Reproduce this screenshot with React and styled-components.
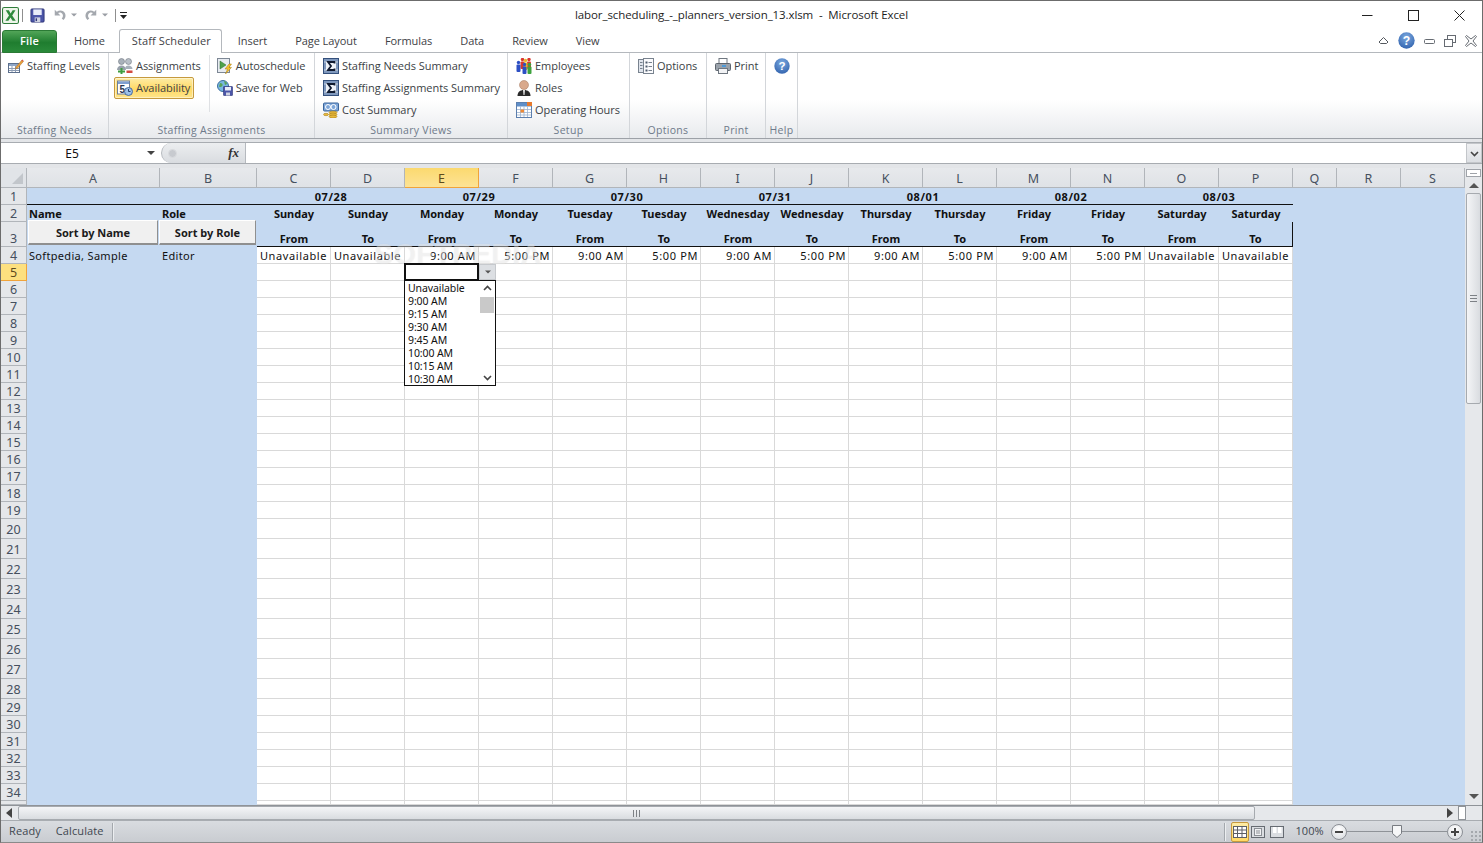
import React from 'react';
import styled, { createGlobalStyle } from 'styled-components';

const UI_FONT = '"Open Sans", "Noto Sans", "Liberation Sans", sans-serif';
const SHEET_FONT = '"Noto Sans", "Open Sans", "Liberation Sans", sans-serif';
const BLUE = '#c5d9f1';
const GRID_LINE = '#d9d9d9';

const GlobalStyle = createGlobalStyle`
  html, body { margin: 0; padding: 0; background: #fff; }
  body { font-family: ${UI_FONT}; overflow: hidden; }
  * { box-sizing: border-box; }
`;

const Window = styled.div`
  width: 1483px;
  height: 843px;
  display: flex;
  flex-direction: column;
  border: 1px solid #6c6c6c;
  border-bottom-color: #8a8a8a;
  background: #fff;
  overflow: hidden;
`;

const TitleBar = styled.div`
  height: 28px;
  flex: none;
  display: grid;
  grid-template-columns: 1fr auto 1fr;
  align-items: center;
`;

const QuickAccess = styled.div`
  display: flex;
  align-items: center;
  height: 28px;
  padding: 0 0 0 1px;
`;

const QuickSep = styled.span`
  width: 1px;
  height: 13px;
  flex: none;
  background: #8f8f8f;
  margin: 0 ${p => p.$r}px 0 ${p => p.$l}px;
`;

const QuickGap = styled.span`
  width: ${p => p.$w}px;
  flex: none;
`;

const TitleText = styled.div`
  font-size: 11.5px;
  color: #1e1e1e;
  letter-spacing: -0.09px;
  white-space: pre;
  padding-bottom: 2px;
`;

const WindowButtons = styled.div`
  display: flex;
  justify-content: flex-end;
  align-items: center;
  gap: 35px;
  padding-right: 17px;
`;

const TabRow = styled.div`
  height: 24px;
  flex: none;
  display: flex;
  align-items: flex-end;
  border-bottom: 1px solid #b4b8bd;
  padding-left: 1px;
`;

const FileTab = styled.div`
  width: 55px;
  height: 23px;
  margin-right: 3px;
  margin-bottom: -1px;
  padding-bottom: 2px;
  border-radius: 3px 3px 0 0;
  border: 1px solid #2b7a35;
  background: linear-gradient(#52a558, #1f7d2f 55%, #2a8a3a);
  color: #fff;
  font-size: 11px;
  font-weight: 600;
  letter-spacing: 0.2px;
  display: flex;
  align-items: center;
  justify-content: center;
`;

const Tab = styled.div`
  height: ${p => (p.$active ? 24 : 22)}px;
  padding: 0 ${p => (p.$active ? 10 : 14)}px 2px ${p => (p.$active ? 12 : 14)}px;
  margin: ${p => (p.$active ? '0 2px -1px 0' : '0')};
  font-size: 11px;
  letter-spacing: ${p => (p.$active ? 0.1 : -0.06)}px;
  color: #3e4145;
  display: flex;
  align-items: center;
  background: #fff;
  border: ${p => (p.$active ? '1px solid #b4b8bd' : '0')};
  border-bottom: 0;
  border-radius: 3px 3px 0 0;
  white-space: nowrap;
`;

const RibbonHelp = styled.div`
  margin-left: auto;
  height: 23px;
  display: flex;
  align-items: center;
  gap: 9px;
  padding-right: 5px;
`;

const Ribbon = styled.div`
  height: 86px;
  flex: none;
  display: flex;
  background: linear-gradient(#fff 0, #fff 55%, #e8eaed 100%);
  border-bottom: 1px solid #9da1a7;
`;

const Group = styled.div`
  width: ${p => p.$w}px;
  flex: none;
  display: flex;
  flex-direction: column;
  border-right: 1px solid #d3d6da;
`;

const GroupBody = styled.div`
  flex: 1;
  display: flex;
  padding: 2px 0 0 ${p => p.$pad ?? 5}px;
`;

const GroupLabel = styled.div`
  height: 16px;
  line-height: 16px;
  text-align: center;
  font-size: 10.5px;
  letter-spacing: 0.3px;
  color: #6e7a8a;
`;

const ItemColumn = styled.div`
  display: flex;
  flex-direction: column;
  align-items: flex-start;
  ${p => p.$rule && `
    border-left: 1px solid #dfe1e4;
    margin: 0 0 10px 5px;
    padding-left: 4px;
  `}
`;

const Item = styled.div`
  height: 22px;
  display: flex;
  align-items: center;
  gap: 3px;
  padding: 0 ${p => (p.$on ? 2 : 3)}px 2px;
  font-size: 11px;
  letter-spacing: -0.04px;
  color: #3b3f45;
  white-space: nowrap;
  border-radius: 2px;
  & > svg { margin-top: 2px; }
  ${p => p.$on && `
    width: 80px;
    border: 1px solid #c69a3e;
    background: linear-gradient(#fdeca6, #ffd965 55%, #ffe58a);
    box-shadow: inset 0 0 0 1px rgba(255, 255, 255, .45);
  `}
`;

const FormulaZone = styled.div`
  height: 29px;
  flex: none;
  padding: 3px 0 4px;
  background: #e3e5e8;
`;

const FormulaBar = styled.div`
  height: 22px;
  display: flex;
  background: #fff;
  border-top: 1px solid #a8acb1;
  border-bottom: 1px solid #a8acb1;
`;

const NameBox = styled.div`
  width: 160px;
  flex: none;
  display: flex;
  align-items: center;
  justify-content: center;
  padding-right: 18px;
  position: relative;
  font-family: ${SHEET_FONT};
  font-size: 12px;
  color: #111;
`;

const NameArrow = styled.span`
  position: absolute;
  right: 6px;
  top: 8px;
  border: 4px solid transparent;
  border-top: 4px solid #444;
  border-bottom: 0;
`;

const FormulaTools = styled.div`
  width: 85px;
  flex: none;
  display: flex;
  align-items: center;
  justify-content: space-between;
  padding: 0 6px;
  border-radius: 10px 0 0 10px;
  border-left: 1px solid #b5b9be;
  border-right: 1px solid #b5b9be;
  background: linear-gradient(#eceef0, #d9dce0);
`;

const FxDot = styled.span`
  width: 9px;
  height: 9px;
  border-radius: 50%;
  background: #c7cacf;
  border: 1px solid #dadcdf;
`;

const FxLabel = styled.span`
  font-family: "Liberation Serif", serif;
  font-style: italic;
  font-weight: 700;
  font-size: 13px;
  color: #333;
`;

const FormulaInput = styled.div`
  flex: 1;
`;

const FormulaExpand = styled.div`
  width: 16px;
  flex: none;
  display: flex;
  align-items: center;
  justify-content: center;
  border: 1px solid #c3c6ca;
  background: linear-gradient(#eff0f2, #dcdfe3);
`;

const SheetArea = styled.div`
  height: 637px;
  flex: none;
  display: flex;
`;

const SheetWrap = styled.div`
  position: relative;
  width: 1464px;
  flex: none;
  overflow: hidden;
`;

const Sheet = styled.div`
  display: grid;
  grid-template-columns: 26px 133px 97px repeat(14, 74px) 44px 64px 64px;
  font-family: ${SHEET_FONT};
  font-size: 11px;
  color: #111;
`;

const Corner = styled.div`
  height: 20px;
  background: #e1e4e8;
  border-right: 1px solid #b1b5ba;
  border-bottom: 1px solid #b1b5ba;
  position: relative;
  &::after {
    content: '';
    position: absolute;
    right: 3px;
    bottom: 3px;
    border-style: solid;
    border-width: 0 0 11px 11px;
    border-color: transparent transparent #c2c6cb transparent;
  }
`;

const ColHead = styled.div`
  height: 20px;
  padding-top: 2px;
  display: flex;
  align-items: center;
  justify-content: center;
  font-size: 12.5px;
  color: ${p => (p.$active ? '#5d4a1c' : '#46505e')};
  border-right: 1px solid ${p => (p.$active ? '#f0a33a' : '#b1b5ba')};
  border-bottom: 1px solid ${p => (p.$active ? '#f0a33a' : '#b1b5ba')};
  background: ${p => (p.$active ? 'linear-gradient(#fbd96f, #fde395)' : 'linear-gradient(#e7e9ec, #dfe2e6)')};
`;

const RowHead = styled.div`
  display: flex;
  align-items: flex-end;
  justify-content: center;
  height: ${p => p.$h}px;
  padding-bottom: ${p => (p.$h === 20 ? 1 : 0)}px;
  font-size: 12.5px;
  line-height: 15px;
  color: ${p => (p.$active ? '#5d4a1c' : '#46505e')};
  border-right: 1px solid ${p => (p.$active ? '#f0a33a' : '#b1b5ba')};
  border-bottom: 1px solid ${p => (p.$active ? '#f0a33a' : '#b1b5ba')};
  background: ${p => (p.$active ? '#fde07f' : '#e5e7ea')};
  overflow: hidden;
`;

const Cell = styled.div`
  grid-column: span ${p => p.$span || 1};
  height: ${p => p.$h}px;
  display: flex;
  align-items: flex-end;
  justify-content: ${p => p.$align || 'flex-start'};
  padding: 0 2px ${p => (p.$white || p.$rule ? 0 : 1)}px;
  line-height: 15px;
  white-space: nowrap;
  overflow: visible;
  font-weight: ${p => (p.$bold ? 700 : 400)};
  letter-spacing: ${p => (p.$date ? 0.6 : p.$bold ? 0 : p.$white ? 0.62 : 0.32)}px;
  background: ${p => (p.$white ? '#fff' : BLUE)};
  ${p => p.$white && `
    border-right: 1px solid ${GRID_LINE};
    border-bottom: 1px solid ${GRID_LINE};
  `}
  ${p => p.$rule && 'border-bottom: 1px solid #111;'}
  ${p => p.$end && 'border-right: 1px solid #111;'}
`;

const SortButton = styled.div`
  position: absolute;
  top: 52px;
  left: ${p => p.$left}px;
  width: ${p => p.$w}px;
  height: 25px;
  display: flex;
  align-items: center;
  justify-content: center;
  font-family: ${SHEET_FONT};
  font-weight: 700;
  font-size: 11px;
  color: #1b1b1b;
  background: #f0f0f0;
  border-top: 1px solid #fff;
  border-left: 1px solid #fff;
  border-right: 1px solid #8f8f8f;
  border-bottom: 2px solid #8f8f8f;
`;

const Watermark = styled.div`
  position: absolute;
  left: 373px;
  top: 70px;
  font-family: "Liberation Sans", sans-serif;
  font-size: 29px;
  font-weight: 700;
  letter-spacing: 0.2px;
  color: rgba(255, 255, 255, .36);
  text-shadow: 0 0 1px rgba(150, 150, 150, .2);
  pointer-events: none;
`;

const Selection = styled.div`
  position: absolute;
  left: 403px;
  top: 95px;
  width: 75px;
  height: 18px;
  background: #fff;
  border: 2px solid #111;
`;

const DropButton = styled.div`
  position: absolute;
  left: 478px;
  top: 96px;
  width: 17px;
  height: 16px;
  display: flex;
  align-items: center;
  justify-content: center;
  background: #dcdfe3;
  border: 1px solid #c6c9cd;
`;

const DropList = styled.div`
  position: absolute;
  left: 403px;
  top: 112px;
  width: 92px;
  height: 106px;
  padding: 1px 0 0 3px;
  background: #fff;
  border: 1px solid #111;
  font-family: ${SHEET_FONT};
  font-size: 10.5px;
  letter-spacing: -0.1px;
  line-height: 13px;
  color: #111;
`;

const DropScroll = styled.div`
  position: absolute;
  right: 0;
  top: 0;
  bottom: 0;
  width: 16px;
  display: flex;
  flex-direction: column;
  align-items: center;
  justify-content: space-between;
  padding: 3px 0 3px;
`;

const DropThumb = styled.span`
  position: absolute;
  left: 1px;
  top: 16px;
  width: 14px;
  height: 16px;
  background: #c9c9c9;
`;

const VScroll = styled.div`
  width: 17px;
  flex: none;
  display: flex;
  flex-direction: column;
  align-items: center;
  background: #e6e8eb;
`;

const SplitBox = styled.div`
  width: 15px;
  height: 8px;
  margin-top: 1px;
  flex: none;
  background: #fff;
  border: 1px solid #9fa3a9;
  display: flex;
  align-items: center;
  justify-content: center;
  &::after {
    content: '';
    width: 7px;
    height: 1px;
    background: #9fa3a9;
  }
`;

const ScrollArrow = styled.div`
  flex: none;
  ${p => p.$up && 'margin-top: 6px;'}
  ${p => p.$down && 'margin: auto 0 6px;'}
  border-left: 5px solid transparent;
  border-right: 5px solid transparent;
  ${p => (p.$up ? 'border-bottom: 5px solid #555;' : 'border-top: 5px solid #555;')}
`;

const VThumb = styled.div`
  width: 15px;
  height: 211px;
  margin-top: 5px;
  flex: none;
  display: flex;
  align-items: center;
  justify-content: center;
  border: 1px solid #a6aaaf;
  border-radius: 2px;
  background: linear-gradient(90deg, #f4f5f7, #d9dce0);
`;

const Grip = styled.span`
  width: 7px;
  height: 7px;
  background: repeating-linear-gradient(#7d8186 0 1px, transparent 1px 3px);
  ${p => p.$flat && 'transform: rotate(90deg);'}
`;

const HScroll = styled.div`
  height: 16px;
  flex: none;
  display: flex;
  align-items: center;
  background: #e6e8eb;
  border-top: 1px solid #8f9398;
  border-bottom: 1px solid #a8acb1;
`;

const HArrow = styled.span`
  flex: none;
  margin: ${p => p.$margin};
  border-top: 5px solid transparent;
  border-bottom: 5px solid transparent;
  ${p => (p.$left ? 'border-right: 6px solid #444;' : 'border-left: 6px solid #444;')}
`;

const HThumb = styled.div`
  width: 1237px;
  height: 14px;
  flex: none;
  display: flex;
  align-items: center;
  justify-content: center;
  border: 1px solid #a6aaaf;
  border-radius: 2px;
  background: linear-gradient(#f4f5f7, #d9dce0);
`;

const HSplit = styled.span`
  width: 8px;
  height: 14px;
  flex: none;
  background: #fff;
  border: 1px solid #8f9398;
  margin-left: 5px;
`;

const StatusBar = styled.div`
  flex: 1;
  display: flex;
  align-items: center;
  font-size: 11px;
  letter-spacing: 0.1px;
  color: #3f4750;
  background: linear-gradient(#d9dce0, #c9ccd1);
`;

const StatusText = styled.span`
  margin: 0 0 2px ${p => p.$ml}px;
`;

const StatusSep = styled.span`
  width: 2px;
  height: 18px;
  margin-left: ${p => p.$ml}px;
  background: #a4a8ad;
  border-right: 1px solid #eceef0;
  flex: none;
`;

const ViewButton = styled.span`
  width: 18px;
  height: 20px;
  flex: none;
  margin-left: ${p => p.$ml}px;
  display: flex;
  align-items: center;
  justify-content: center;
  border-radius: 2px;
  ${p => p.$on && `
    border: 1px solid #c69a3e;
    background: linear-gradient(#fdeca6, #ffd965);
  `}
`;

const ZoomText = styled.span`
  width: 28px;
  flex: none;
  margin: 0 0 2px 10px;
  letter-spacing: 0;
  font-size: 11px;
`;

const ZoomRound = styled.span`
  width: 16px;
  height: 16px;
  flex: none;
  margin-left: ${p => p.$ml || 0}px;
  display: flex;
  align-items: center;
  justify-content: center;
  border-radius: 50%;
  border: 1px solid #8b8f95;
  background: radial-gradient(circle at 50% 30%, #fff, #d6d9dd);
`;

const ZoomTrack = styled.div`
  position: relative;
  width: 100px;
  height: 1px;
  flex: none;
  background: #8f9398;
`;

const ZoomThumb = styled.svg`
  position: absolute;
  left: 45px;
  top: -6px;
`;

const ResizeGrip = styled.span`
  width: 11px;
  height: 11px;
  margin: 8px 0 0 7px;
  flex: none;
  background: radial-gradient(#a4a8ad 1px, transparent 1.2px) 0 0 / 4px 4px;
`;

const Svg = ({ size = 16, box = 16, children, ...rest }) => (
  <svg width={size} height={size} viewBox={`0 0 ${box} ${box}`} style={{ flex: 'none', display: 'block' }} {...rest}>
    {children}
  </svg>
);

const ExcelLogo = () => (
  <Svg size={17}>
    <rect x="0.500" y="0.500" width="15" height="15" rx="1.500" fill="#eef5ea" stroke="#2f7d3a" />
    <path d="M3.500 3h3l1.600 3L10 3h2.700L9.600 8l3.300 5H9.900L8 9.800 6 13H3.200l3.400-5z" fill="#2f8a3c" />
  </Svg>
);

const SaveIcon = () => (
  <Svg size={15}>
    <rect x="1" y="1" width="14" height="14" rx="1" fill="#4b55a8" stroke="#2f3578" />
    <rect x="3.500" y="1.500" width="9" height="6" fill="#e8ecf8" />
    <rect x="5" y="10" width="6" height="5" fill="#cfd3e2" />
    <rect x="6" y="11" width="1.500" height="3" fill="#2f3578" />
  </Svg>
);

const UndoIcon = ({ flip }) => (
  <Svg size={14} transform={flip ? 'scale(-1 1)' : undefined}>
    <path d="M2 2v6.500h6.500L5.800 5.800C7.500 4.700 10 5.200 11 7c.8 1.700.3 3.500-1 5l2 1.800c2.200-2 3-5 1.700-7.800C12.500 3 8 1.500 4.300 4.300z" fill="#a4a8ae" />
  </Svg>
);

const TinyDown = ({ color = '#9a9ea4', ml = 4 }) => (
  <Svg size={6} box={6} style={{ flex: 'none', marginLeft: ml }}>
    <path d="M0 1.500h6L3 4.500z" fill={color} />
  </Svg>
);

const CustomizeIcon = () => (
  <Svg size={9} box={9}>
    <rect x="1" y="1" width="7" height="1" fill="#222" />
    <path d="M1 4h7L4.500 8z" fill="#222" />
  </Svg>
);

const LevelsIcon = () => (
  <Svg>
    <rect x="0.500" y="5.500" width="11" height="9" fill="#fff" stroke="#5c6f8c" />
    <rect x="1" y="6" width="10" height="2" fill="#8fa6c6" />
    <path d="M1 10.500h10M1 12.500h10M4 8v6M7.500 8v6" stroke="#8d9cb3" />
    <path d="M8 9l6-7 1.500 1.300-6 7L7.500 11z" fill="#e9a23b" stroke="#a5651d" strokeWidth=".5" />
    <path d="M13.500 2.600l1-1 1 1-1 1z" fill="#d7574a" />
  </Svg>
);

const AssignIcon = () => (
  <Svg>
    <circle cx="4.500" cy="3.500" r="3" fill="#a9b1ba" stroke="#6f7780" strokeWidth=".6" />
    <path d="M0 12c0-3 2-4.500 4.500-4.500S9 9 9 12z" fill="#98a1ab" />
    <circle cx="11.500" cy="3.500" r="3" fill="#b8bfc7" stroke="#6f7780" strokeWidth=".6" />
    <path d="M8 11c0-2.500 1.500-3.500 3.500-3.500S15.500 9 15.500 11z" fill="#a7b0ba" />
    <path d="M1 12.500h2.500V10h2v2.500H8v2H5.500V17h-2v-2.500H1z" fill="#3f9e3f" />
    <rect x="9.500" y="12.500" width="6" height="2.500" fill="#d2493f" />
  </Svg>
);

const AvailIcon = () => (
  <Svg>
    <rect x="0.500" y="1" width="12" height="13" fill="#fff" stroke="#6f7f99" />
    <rect x="1" y="1.500" width="11" height="2.500" fill="#7f9fd0" />
    <text x="2.500" y="12.500" fontSize="10" fontWeight="700" fontFamily="Liberation Sans" fill="#2a3550">5</text>
    <circle cx="11.500" cy="11.500" r="4" fill="#9cc0e8" stroke="#47699b" />
    <path d="M11.500 9v2.500h2" stroke="#24406e" fill="none" />
  </Svg>
);

const AutoIcon = () => (
  <Svg>
    <rect x="0.500" y="0.500" width="12" height="14" fill="#e7ebf1" stroke="#7d8794" />
    <path d="M3 3l6 4-6 4z" fill="#4ea24a" stroke="#2b6f2b" strokeWidth=".5" />
    <path d="M12 6l-4 5h2.500L8.500 16l6-6.500H12l2.500-3.500z" fill="#f3c02f" stroke="#a87d12" strokeWidth=".5" />
  </Svg>
);

const WebIcon = () => (
  <Svg>
    <circle cx="6" cy="6" r="5.500" fill="#79b7e3" stroke="#3c6f9e" />
    <path d="M3 3c2 0 3 1 2.500 2.500S3 7.500 2 6.500zM7 1c2 .5 3 1.500 3 3L8 5z" fill="#58a35a" />
    <rect x="6.500" y="6.500" width="9" height="9" rx=".5" fill="#4b55a8" stroke="#2f3578" strokeWidth=".6" />
    <rect x="8" y="7" width="6" height="3.500" fill="#e8ecf8" />
    <rect x="9" y="12.500" width="4" height="3" fill="#cfd3e2" />
  </Svg>
);

const SigmaIcon = () => (
  <Svg>
    <rect x="0.500" y="0.500" width="15" height="15" fill="#7f98bd" stroke="#34507c" />
    <path d="M1 4h14M1 12h14" stroke="#c6d3e6" />
    <rect x="3" y="3" width="10" height="10" fill="#eef2f8" />
    <path d="M11.500 5.500V4H5l3 4-3 4h6.500v-1.500" fill="none" stroke="#0f1a30" strokeWidth="1.800" />
  </Svg>
);

const CostIcon = () => (
  <Svg>
    <rect x="0.500" y="1" width="15" height="8" rx="1" fill="#7ea6d8" stroke="#3b659b" />
    <circle cx="5" cy="5" r="2.500" fill="none" stroke="#fff" />
    <circle cx="10.500" cy="5" r="2.500" fill="none" stroke="#fff" />
    <ellipse cx="10" cy="10.500" rx="4" ry="1.500" fill="#e9b93a" stroke="#9a7414" strokeWidth=".5" />
    <ellipse cx="10" cy="12.500" rx="4" ry="1.500" fill="#e9b93a" stroke="#9a7414" strokeWidth=".5" />
    <ellipse cx="10" cy="14.500" rx="4" ry="1.500" fill="#e9b93a" stroke="#9a7414" strokeWidth=".5" />
    <ellipse cx="3" cy="12.500" rx="2.500" ry="1.200" fill="#e9b93a" stroke="#9a7414" strokeWidth=".5" />
  </Svg>
);

const Person = ({ x, y, color }) => (
  <g>
    <circle cx={x + 2} cy={y + 1.500} r="1.700" fill={color} />
    <rect x={x} y={y + 3.500} width="4" height="7.500" rx="1" fill={color} />
  </g>
);

const EmployeesIcon = () => (
  <Svg>
    <Person x={4.500} y={0} color="#d9382e" />
    <Person x={11} y={0} color="#d9382e" />
    <Person x={7.500} y={1} color="#e8b92a" />
    <Person x={0.500} y={3} color="#2c4fc4" />
    <Person x={6.500} y={5} color="#2c4fc4" />
    <Person x={11.500} y={5} color="#3ea33e" />
  </Svg>
);

const RolesIcon = () => (
  <Svg>
    <circle cx="8" cy="5" r="4.500" fill="#d9a98c" stroke="#a1755a" strokeWidth=".5" />
    <path d="M1.500 16c0-4 2.500-6 6.500-6s6.500 2 6.500 6z" fill="#2a2a2a" />
    <path d="M7 10h2l-.5 5h-1z" fill="#e9e9e9" />
  </Svg>
);

const HoursIcon = () => (
  <Svg>
    <rect x="0.500" y="0.500" width="15" height="15" fill="#fff" stroke="#5c7fae" />
    <rect x="1" y="1" width="14" height="3.500" fill="#5f8fc9" />
    <rect x="11" y="0" width="5" height="4" fill="#e67a2e" />
    <path d="M1 7.500h14M1 10.500h14M1 13h14M4.500 4.500V15M8 4.500V15M11.500 4.500V15" stroke="#9db3cf" strokeWidth=".8" />
    <rect x="4.500" y="7.500" width="3.500" height="3" fill="#ef8a35" />
  </Svg>
);

const OptionsIcon = () => (
  <Svg>
    <rect x="0.500" y="1.500" width="5.500" height="13" fill="#dfe4ec" stroke="#79838f" />
    <rect x="5.500" y="0.500" width="10" height="15" fill="#fbfbfd" stroke="#79838f" />
    <path d="M7.500 3.500h2v2h-2zM7.500 7.500h2v2h-2zM7.500 11.500h2v2h-2z" fill="#4d5a6c" />
    <path d="M10.500 4.500h3.500M10.500 8.500h3.500M10.500 12.500h3.500M2 4.500h2.500M2 7.500h2.500M2 10.500h2.500" stroke="#76808c" />
  </Svg>
);

const PrintIcon = () => (
  <Svg>
    <rect x="4" y="0.500" width="8" height="6" fill="#fff" stroke="#6f7780" />
    <rect x="0.500" y="5.500" width="15" height="7" rx="1" fill="#9aa2ab" stroke="#5d646d" />
    <rect x="7" y="7" width="4" height="2" fill="#4e9ad8" />
    <rect x="3.500" y="10.500" width="9" height="5" fill="#f2f3f5" stroke="#6f7780" />
  </Svg>
);

const HelpIcon = ({ size = 16 }) => (
  <Svg size={size}>
    <defs>
      <radialGradient id="helpBlue" cx="50%" cy="30%" r="70%">
        <stop offset="0" stopColor="#7ba9e0" />
        <stop offset="1" stopColor="#3566b0" />
      </radialGradient>
    </defs>
    <circle cx="8" cy="8" r="7.700" fill="url(#helpBlue)" />
    <text x="8" y="12.300" textAnchor="middle" fontSize="11.500" fontWeight="700" fontFamily="Liberation Sans" fill="#fff">?</text>
  </Svg>
);

const WinMin = () => (
  <Svg size={11} box={11}><path d="M0 5.500h10.500" stroke="#222" /></Svg>
);
const WinMax = () => (
  <Svg size={11} box={11}><rect x="0.500" y="0.500" width="10" height="10" fill="none" stroke="#222" /></Svg>
);
const WinClose = () => (
  <Svg size={11} box={11}><path d="M.5.500l10 10M10.500.500l-10 10" stroke="#222" /></Svg>
);

const RibbonCollapse = () => (
  <Svg size={11} box={11}>
    <path d="M1 7l4.500-4.500L10 7l-1.500 1.500h-6z" fill="#fff" stroke="#55595f" />
  </Svg>
);
const DocMin = () => (
  <Svg size={11} box={11}><rect x="0.500" y="4.500" width="10" height="4" rx="1" fill="#fff" stroke="#666b72" /></Svg>
);
const DocRestore = () => (
  <Svg size={12} box={12}>
    <rect x="3.500" y="0.500" width="8" height="7" fill="#fff" stroke="#666b72" />
    <rect x="0.500" y="4.500" width="8" height="7" fill="#fff" stroke="#666b72" />
  </Svg>
);
const DocClose = () => (
  <Svg size={12} box={12}>
    <path d="M1.500.500L6 4 10.500.500l1 1L8 6l3.500 4.500-1 1L6 8l-4.500 3.500-1-1L4 6 .5 1.500z" fill="#fff" stroke="#666b72" />
  </Svg>
);

const Chevron = ({ up }) => (
  <Svg size={9} box={9}>
    <path d={up ? 'M1 6l3.500-3.500L8 6' : 'M1 3l3.500 3.500L8 3'} fill="none" stroke="#444" strokeWidth="1.600" />
  </Svg>
);

const ViewNormal = () => (
  <Svg size={14} box={14}>
    <rect x="0.500" y="1.500" width="13" height="11" fill="#fff" stroke="#5c6066" />
    <path d="M0 5h14M0 8.500h14M4.500 1v11M9 1v11" stroke="#5c6066" />
  </Svg>
);
const ViewLayout = () => (
  <Svg size={14} box={14}>
    <rect x="0.500" y="1.500" width="13" height="11" fill="#dadde1" stroke="#666b72" />
    <rect x="3.500" y="3.500" width="7" height="7" fill="#f1f2f4" stroke="#8b8f95" />
    <path d="M5 6h4M5 8h4" stroke="#8b8f95" />
  </Svg>
);
const ViewBreak = () => (
  <Svg size={14} box={14}>
    <rect x="0.500" y="1.500" width="13" height="11" fill="#dadde1" stroke="#666b72" />
    <rect x="3" y="2" width="3.500" height="6" fill="#fff" />
    <rect x="8" y="2" width="3.500" height="6" fill="#fff" />
  </Svg>
);

const COLUMNS = 'ABCDEFGHIJKLMNOPQRS'.split('');
const DATA_COLUMNS = COLUMNS.slice(2, 16);
const DATES = ['07/28', '07/29', '07/30', '07/31', '08/01', '08/02', '08/03'];
const DAYS = ['Sunday', 'Monday', 'Tuesday', 'Wednesday', 'Thursday', 'Friday', 'Saturday'];
const TIMES = ['Unavailable', '9:00 AM', '9:15 AM', '9:30 AM', '9:45 AM', '10:00 AM', '10:15 AM', '10:30 AM'];
const LAST_ROW = 35;

const rowHeight = n => {
  if (n === LAST_ROW) return 4;
  if (n >= 20 && n <= 28) return 20;
  return 17;
};

const BODY_ROWS = Array.from({ length: LAST_ROW - 3 }, (_, i) => i + 4);

const availability = col => {
  const i = DATA_COLUMNS.indexOf(col);
  if (i < 2 || i > 11) return 'Unavailable';
  return i % 2 === 0 ? '9:00 AM' : '5:00 PM';
};

const SideFill = ({ h }) => (
  <>
    <Cell $h={h} />
    <Cell $h={h} />
    <Cell $h={h} />
  </>
);

const HeaderRows = () => (
  <>
    <RowHead $h={17}>1</RowHead>
    <Cell $h={17} $span={2} $rule />
    {DATES.map(date => (
      <Cell key={date} $h={17} $span={2} $rule $bold $date $align="center">{date}</Cell>
    ))}
    <SideFill h={17} />

    <RowHead $h={17}>2</RowHead>
    <Cell $h={17} $bold>Name</Cell>
    <Cell $h={17} $bold>Role</Cell>
    {DATA_COLUMNS.map((col, i) => (
      <Cell key={col} $h={17} $bold $align="center">{DAYS[Math.floor(i / 2)]}</Cell>
    ))}
    <SideFill h={17} />

    <RowHead $h={25}>3</RowHead>
    <Cell $h={25} />
    <Cell $h={25} />
    {DATA_COLUMNS.map((col, i) => (
      <Cell key={col} $h={25} $bold $rule $end={col === 'P'} $align="center">{i % 2 === 0 ? 'From' : 'To'}</Cell>
    ))}
    <SideFill h={25} />
  </>
);

const BodyRow = ({ n }) => {
  const h = rowHeight(n);
  return (
    <>
      <RowHead $h={h} $active={n === 5}>{n < LAST_ROW && n}</RowHead>
      <Cell $h={h}>{n === 4 && 'Softpedia, Sample'}</Cell>
      <Cell $h={h}>{n === 4 && 'Editor'}</Cell>
      {DATA_COLUMNS.map(col => {
        const value = n === 4 ? availability(col) : null;
        return (
          <Cell key={col} $h={h} $white $align={value === 'Unavailable' ? 'center' : 'flex-end'}>{value}</Cell>
        );
      })}
      <SideFill h={h} />
    </>
  );
};

const TimeDropdown = () => (
  <>
    <Selection />
    <DropButton><TinyDown color="#555" ml={0} /></DropButton>
    <DropList>
      {TIMES.map(t => <div key={t}>{t}</div>)}
      <DropScroll>
        <Chevron up />
        <DropThumb />
        <Chevron />
      </DropScroll>
    </DropList>
  </>
);

export default function App() {
  return (
    <>
      <GlobalStyle />
      <Window>
        <TitleBar>
          <QuickAccess>
            <ExcelLogo />
            <QuickSep $l={3} $r={7} />
            <SaveIcon />
            <QuickGap $w={8} />
            <UndoIcon />
            <TinyDown />
            <QuickGap $w={7} />
            <UndoIcon flip />
            <TinyDown />
            <QuickSep $l={7} $r={3} />
            <CustomizeIcon />
          </QuickAccess>
          <TitleText>labor_scheduling_-_planners_version_13.xlsm  -  Microsoft Excel</TitleText>
          <WindowButtons>
            <WinMin />
            <WinMax />
            <WinClose />
          </WindowButtons>
        </TitleBar>

        <TabRow>
          <FileTab>File</FileTab>
          <Tab>Home</Tab>
          <Tab $active>Staff Scheduler</Tab>
          <Tab>Insert</Tab>
          <Tab>Page Layout</Tab>
          <Tab>Formulas</Tab>
          <Tab>Data</Tab>
          <Tab>Review</Tab>
          <Tab>View</Tab>
          <RibbonHelp>
            <RibbonCollapse />
            <HelpIcon size={17} />
            <DocMin />
            <DocRestore />
            <DocClose />
          </RibbonHelp>
        </TabRow>

        <Ribbon>
          <Group $w={108}>
            <GroupBody $pad={4}>
              <ItemColumn><Item><LevelsIcon />Staffing Levels</Item></ItemColumn>
            </GroupBody>
            <GroupLabel>Staffing Needs</GroupLabel>
          </Group>
          <Group $w={206}>
            <GroupBody>
              <ItemColumn>
                <Item><AssignIcon />Assignments</Item>
                <Item $on><AvailIcon />Availability</Item>
              </ItemColumn>
              <ItemColumn $rule>
                <Item><AutoIcon />Autoschedule</Item>
                <Item><WebIcon />Save for Web</Item>
              </ItemColumn>
            </GroupBody>
            <GroupLabel>Staffing Assignments</GroupLabel>
          </Group>
          <Group $w={193}>
            <GroupBody>
              <ItemColumn>
                <Item><SigmaIcon />Staffing Needs Summary</Item>
                <Item><SigmaIcon />Staffing Assignments Summary</Item>
                <Item><CostIcon />Cost Summary</Item>
              </ItemColumn>
            </GroupBody>
            <GroupLabel>Summary Views</GroupLabel>
          </Group>
          <Group $w={122}>
            <GroupBody>
              <ItemColumn>
                <Item><EmployeesIcon />Employees</Item>
                <Item><RolesIcon />Roles</Item>
                <Item><HoursIcon />Operating Hours</Item>
              </ItemColumn>
            </GroupBody>
            <GroupLabel>Setup</GroupLabel>
          </Group>
          <Group $w={77}>
            <GroupBody>
              <ItemColumn><Item><OptionsIcon />Options</Item></ItemColumn>
            </GroupBody>
            <GroupLabel>Options</GroupLabel>
          </Group>
          <Group $w={59}>
            <GroupBody>
              <ItemColumn><Item><PrintIcon />Print</Item></ItemColumn>
            </GroupBody>
            <GroupLabel>Print</GroupLabel>
          </Group>
          <Group $w={32}>
            <GroupBody>
              <ItemColumn><Item><HelpIcon /></Item></ItemColumn>
            </GroupBody>
            <GroupLabel>Help</GroupLabel>
          </Group>
        </Ribbon>

        <FormulaZone>
          <FormulaBar>
            <NameBox>E5<NameArrow /></NameBox>
            <FormulaTools><FxDot /><FxLabel>fx</FxLabel></FormulaTools>
            <FormulaInput />
            <FormulaExpand><Chevron /></FormulaExpand>
          </FormulaBar>
        </FormulaZone>

        <SheetArea>
          <SheetWrap>
            <Sheet>
              <Corner />
              {COLUMNS.map(col => <ColHead key={col} $active={col === 'E'}>{col}</ColHead>)}
              <HeaderRows />
              {BODY_ROWS.map(n => <BodyRow key={n} n={n} />)}
            </Sheet>
            <SortButton $left={27} $w={130}>Sort by Name</SortButton>
            <SortButton $left={158} $w={97}>Sort by Role</SortButton>
            <Watermark aria-hidden="true">SOFTPEDIA</Watermark>
            <TimeDropdown />
          </SheetWrap>
          <VScroll>
            <SplitBox />
            <ScrollArrow $up />
            <VThumb><Grip /></VThumb>
            <ScrollArrow $down />
          </VScroll>
        </SheetArea>

        <HScroll>
          <HArrow $left $margin="0 6px 0 5px" />
          <HThumb><Grip $flat /></HThumb>
          <HArrow $margin="0 0 0 192px" />
          <HSplit />
        </HScroll>

        <StatusBar>
          <StatusText $ml={8}>Ready</StatusText>
          <StatusText $ml={15}>Calculate</StatusText>
          <StatusSep $ml={8} />
          <StatusSep $ml={1110} />
          <ViewButton $on $ml={5}><ViewNormal /></ViewButton>
          <ViewButton $ml={0}><ViewLayout /></ViewButton>
          <ViewButton $ml={1}><ViewBreak /></ViewButton>
          <ZoomText>100%</ZoomText>
          <ZoomRound $ml={7}><Svg size={10} box={10}><rect x="1" y="4" width="8" height="2" fill="#444" /></Svg></ZoomRound>
          <ZoomTrack>
            <ZoomThumb width="10" height="13" viewBox="0 0 10 13">
              <path d="M.5.500h9v8L5 12.500.5 8.500z" fill="#f6f7f8" stroke="#777b81" />
            </ZoomThumb>
          </ZoomTrack>
          <ZoomRound><Svg size={10} box={10}><path d="M1 4h3V1h2v3h3v2H6v3H4V6H1z" fill="#444" /></Svg></ZoomRound>
          <ResizeGrip />
        </StatusBar>
      </Window>
    </>
  );
}
